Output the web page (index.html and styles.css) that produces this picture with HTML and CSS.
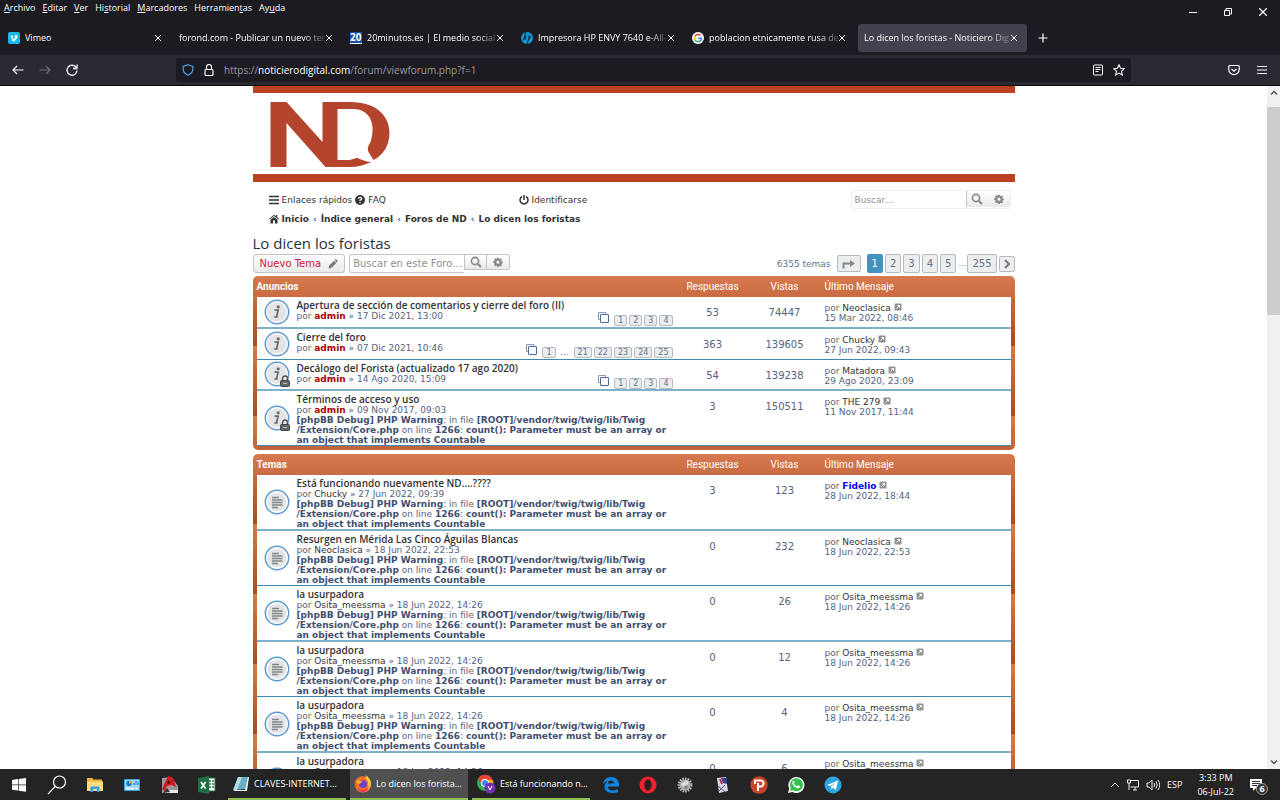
FILE: index.html
```
<!DOCTYPE html>
<html lang="es">
<head>
<meta charset="utf-8">
<title>Lo dicen los foristas - Noticiero Digital</title>
<link rel="stylesheet" href="styles.css">
</head>
<body>
<svg class="defs" aria-hidden="true">
  <symbol id="close" viewBox="0 0 8 8"><path d="M1 1l6 6M7 1L1 7" stroke="currentColor" fill="none"/></symbol>
  <symbol id="search" viewBox="0 0 12 12"><circle cx="5" cy="5" r="3.6" fill="none" stroke="currentColor" stroke-width="1.6"/><path d="M7.7 7.7l3.3 3.3" stroke="currentColor" stroke-width="2"/></symbol>
  <symbol id="gear" viewBox="0 0 12 12"><path fill-rule="evenodd" fill="currentColor" d="M5 .8h2l.3 1.4.9.4 1.2-.8 1.4 1.4-.8 1.2.4.9 1.4.3v2l-1.4.3-.4.9.8 1.2-1.4 1.4-1.2-.8-.9.4L7 12H5l-.3-1.4-.9-.4-1.2.8L1.200 9.600l.8-1.200-.4-.9L.2 7.200v-2l1.400-.3.4-.9-.8-1.200L2.600 1.400l1.200.8.9-.4zM6 4.300a1.900 1.900 0 100 3.800 1.900 1.900 0 000-3.800z"/></symbol>
  <symbol id="pages" viewBox="0 0 12 12"><path d="M3.500 8.500h-2v-7h7v2" fill="none" stroke="#8a9bb5"/><rect x="3.500" y="3.500" width="8" height="8" rx=".5" fill="#fff" stroke="#4c6a95"/></symbol>
  <symbol id="jump" viewBox="0 0 8 8"><rect x=".5" y=".5" width="7" height="7" rx="1" fill="#929292"/><path d="M2.500 5.500l2.500-2.500M3.500 2.500h2v2" stroke="#fff" fill="none"/></symbol>
  <symbol id="info" viewBox="0 0 26 26"><circle cx="13" cy="13" r="11.700" fill="#fff" stroke="#5b9bd0" stroke-width="1.500"/><circle cx="13" cy="13" r="9.800" fill="#e2e4e8"/><circle cx="14.200" cy="7.800" r="1.600" fill="#6c6c6c"/><path d="M10.500 11.200h3.700l-1.700 6.300h1.300M10.300 18h3.500" fill="none" stroke="#6c6c6c" stroke-width="1.700"/></symbol>
  <symbol id="lock" viewBox="0 0 10 12"><path d="M2.500 6V3.500a2.500 2.500 0 015 0V6" fill="none" stroke="#555" stroke-width="1.500"/><rect x=".5" y="5.500" width="9" height="6" rx="1" fill="#666" stroke="#444"/><path d="M3 8.500h4" stroke="#bbb"/></symbol>
  <symbol id="post" viewBox="0 0 26 26"><circle cx="13" cy="13" r="11.700" fill="#fff" stroke="#5b9bd0" stroke-width="1.500"/><circle cx="13" cy="13" r="9.500" fill="#e2e4e8"/><path d="M8 8.500h7M8 11h10.500M8 13.500h10.500M8 16h10.500M8 18.500h6" stroke="#858585" stroke-width="1.500"/></symbol>
</svg>

<header class="browser">
  <div class="menubar">
    <nav class="menus"><button><u>A</u>rchivo</button><button><u>E</u>ditar</button><button><u>V</u>er</button><button>Hi<u>s</u>torial</button><button><u>M</u>arcadores</button><button>Herramien<u>t</u>as</button><button>Ay<u>u</u>da</button></nav>
    <div class="window-buttons">
      <button aria-label="Minimizar"><svg class="i10" viewBox="0 0 10 10"><path d="M1 5.500h8" stroke="#fff"/></svg></button>
      <button aria-label="Restaurar"><svg class="i10" viewBox="0 0 10 10"><path d="M3 3V1.500h5.500V7H7M1.500 3.500h5v5h-5z" fill="none" stroke="#fff"/></svg></button>
      <button aria-label="Cerrar"><svg class="i10" viewBox="0 0 8 8"><use href="#close"/></svg></button>
    </div>
  </div>
  <div class="tabs">
    <div class="tab"><svg class="fav" viewBox="0 0 12 12"><rect width="12" height="12" rx="2" fill="#1ab7ea"/><path d="M2.300 4.200c1.300-1.200 2-1.200 2.400.3l.7 2.600c.5 1 1.500-.9 1.500-1.600 0-.5-.4-.6-.9-.4.9-2.700 3.500-2.600 3.500-.9C9.500 6.300 6.700 9.500 5.300 9.500 4 9.500 4 6.500 3.400 4.900c-.1-.3-.5-.1-.8.1z" fill="#fff"/></svg><span>Vimeo</span><button aria-label="Cerrar"><svg class="i8"><use href="#close"/></svg></button></div>
    <div class="tab"><span class="fade">forond.com - Publicar un nuevo ten</span><button aria-label="Cerrar"><svg class="i8"><use href="#close"/></svg></button></div>
    <div class="tab"><b class="fav20">20</b><span class="fade">20minutos.es | El medio social |</span><button aria-label="Cerrar"><svg class="i8"><use href="#close"/></svg></button></div>
    <div class="tab"><svg class="fav" viewBox="0 0 12 12"><circle cx="6" cy="6" r="6" fill="#0b96d5"/><path d="M4.800 0L2.500 8M3.400 4.500q1.800-1 1.400.4L4 8M8.500 4L6.200 12M7.300 4.500q2.500-1 2 .8T6.800 8" stroke="#16202c" fill="none"/></svg><span class="fade">Impresora HP ENVY 7640 e-All-i</span><button aria-label="Cerrar"><svg class="i8"><use href="#close"/></svg></button></div>
    <div class="tab"><svg class="fav" viewBox="0 0 12 12"><circle cx="6" cy="6" r="6" fill="#fff"/><path d="M8.600 3.600A3.500 3.500 0 003 4.300" stroke="#ea4335" stroke-width="1.500" fill="none"/><path d="M3 4.300a3.500 3.500 0 000 3.500" stroke="#fbbc05" stroke-width="1.500" fill="none"/><path d="M3 7.800a3.500 3.500 0 005.200 1" stroke="#34a853" stroke-width="1.500" fill="none"/><path d="M6 6.200h3.500Q9.400 8 8.200 8.800" stroke="#4285f4" stroke-width="1.500" fill="none"/></svg><span class="fade">poblacion etnicamente rusa de l</span><button aria-label="Cerrar"><svg class="i8"><use href="#close"/></svg></button></div>
    <div class="tab active"><span class="fade">Lo dicen los foristas - Noticiero Digit</span><button aria-label="Cerrar"><svg class="i8"><use href="#close"/></svg></button></div>
    <button class="newtab" aria-label="Nueva pestaña"><svg class="i10" viewBox="0 0 10 10"><path d="M5 .5v9M.5 5h9" stroke="#fff" stroke-width="1.200"/></svg></button>
  </div>
  <div class="toolbar">
    <div class="navbtns">
      <button aria-label="Atrás"><svg class="i12" viewBox="0 0 12 12"><path d="M11.500 6H1M5 2L1 6l4 4" fill="none" stroke="#fbfbfe" stroke-width="1.200"/></svg></button>
      <button aria-label="Adelante"><svg class="i12" viewBox="0 0 12 12"><path d="M.5 6H11M7 2l4 4-4 4" fill="none" stroke="#6c6b75" stroke-width="1.200"/></svg></button>
      <button aria-label="Recargar"><svg class="i12" viewBox="0 0 12 12"><path d="M10.200 3.500A5 5 0 1011 6.500M11 .5v4H7" fill="none" stroke="#fbfbfe" stroke-width="1.300"/></svg></button>
    </div>
    <div class="urlbar">
      <svg class="i12" viewBox="0 0 12 12"><path d="M6 .7l4.800 1.700v2.400c0 3-1.800 5.200-4.800 6.500C3 10 1.200 7.800 1.200 4.800V2.400z" fill="none" stroke="#4da3ea" stroke-width="1.200"/></svg>
      <svg class="i12" viewBox="0 0 12 12"><path d="M3.500 5.500V3a2.500 2.500 0 015 0v2.500" fill="none" stroke="#fbfbfe" stroke-width="1.200"/><rect x="2" y="5.500" width="8" height="6" rx="1" fill="none" stroke="#fbfbfe" stroke-width="1.200"/></svg>
      <p class="url">https://<b>noticierodigital.com</b>/forum/viewforum.php?f=1</p>
      <button aria-label="Vista de lectura"><svg class="i12" viewBox="0 0 12 12"><rect x="1.500" y="1" width="9" height="10" rx="1" fill="none" stroke="#fbfbfe"/><path d="M3.500 3.500h5M3.500 5.500h5M3.500 7.500h3" stroke="#fbfbfe"/></svg></button>
      <button aria-label="Marcador"><svg class="i12" viewBox="0 0 12 12"><path d="M6 .8l1.600 3.500 3.700.4-2.800 2.500.8 3.800L6 9.100 2.700 11l.8-3.800L.7 4.700l3.700-.4z" fill="none" stroke="#fbfbfe" stroke-width="1.100"/></svg></button>
    </div>
    <div class="tools">
      <button aria-label="Pocket"><svg class="i12" viewBox="0 0 12 12"><path d="M1.800 1.500h8.400q1 0 1 1v3a5.200 5.200 0 01-10.400 0v-3q0-1 1-1zM3.500 5L6 7.300 8.500 5" fill="none" stroke="#fbfbfe" stroke-width="1.200"/></svg></button>
      <button aria-label="Menú"><svg class="i10" viewBox="0 0 10 10"><path d="M0 1.500h10M0 5h10M0 8.500h10" stroke="#fbfbfe" stroke-width="1.200"/></svg></button>
    </div>
  </div>
</header>

<div class="viewport">
<main class="page"><div class="wrap">
  <div class="banner"><a href="#" aria-label="Noticiero Digital"><svg class="logo" viewBox="0 0 120 66"><path fill="#b5442c" fill-rule="evenodd" d="M1 1h16l36 40V1h28c26 0 39 14 39 31 0 12-6 22-16 27l-5-8c-2-4 1-8 2-10 6-18-1-33-17-33H68v51h10c5 0 7-2 10-2 5 2 9 4 14 4-7 3-14 5-22 5H56L17 22v44H1z"/></svg></a></div>
  <nav class="navbar">
    <div class="navrow">
      <div class="links"><a href="#"><svg class="i10" viewBox="0 0 10 10"><path d="M0 1.500h10M0 5h10M0 8.500h10" stroke="currentColor" stroke-width="1.700"/></svg>Enlaces rápidos</a><a href="#"><svg class="i10" viewBox="0 0 10 10"><circle cx="5" cy="5" r="5" fill="currentColor"/><path d="M3.300 3.800Q3.400 2.300 5 2.300t1.700 1.400Q6.700 4.500 5 5.200v.9M5 7v1.300" stroke="#fff" stroke-width="1.300" fill="none"/></svg>FAQ</a></div>
      <a class="login" href="#"><svg class="i10" viewBox="0 0 10 10"><path d="M5 0v5M3 1.500a4 4 0 104 0" fill="none" stroke="currentColor" stroke-width="1.500"/></svg>Identificarse</a>
      <form class="find top"><input type="text" placeholder="Buscar…" aria-label="Buscar"><button type="button" aria-label="Buscar"><svg class="i12"><use href="#search"/></svg></button><button type="button" aria-label="Búsqueda avanzada"><svg class="i10"><use href="#gear"/></svg></button></form>
    </div>
    <div class="crumbs"><a href="#"><svg class="i10" viewBox="0 0 10 10"><path d="M0 5l5-4.200L7 2.500V1h1.300v2.500L10 5l-.6.600L5 2 .6 5.600z" fill="currentColor"/><path d="M1.500 5.700L5 2.900l3.500 2.800v3.800H6V6.500H4v3H1.500z" fill="currentColor"/></svg>Inicio</a><i>‹</i><a href="#">Índice general</a><i>‹</i><a href="#">Foros de ND</a><i>‹</i><a href="#">Lo dicen los foristas</a></div>
  </nav>
  <h2>Lo dicen los foristas</h2>
  <div class="actions">
    <button class="new">Nuevo Tema <svg class="i10" viewBox="0 0 10 10"><path d="M.5 9.500l.6-2.800L6 1.800l2.200 2.200-4.900 4.900zM6.600 1.200l.7-.7q.5-.4 1 0l1.200 1.200q.4.500 0 1l-.7.700z" fill="#777"/></svg></button>
    <form class="find"><input type="text" placeholder="Buscar en este Foro…" aria-label="Buscar en este Foro"><button type="button" aria-label="Buscar"><svg class="i12"><use href="#search"/></svg></button><button type="button" aria-label="Búsqueda avanzada"><svg class="i10"><use href="#gear"/></svg></button></form>
    <div class="pager"><span class="count">6355 temas</span><a class="goto" href="#" aria-label="Ir a página"><svg class="jumpicon" viewBox="0 0 14 10"><path d="M1.500 9.500V4.500H9" fill="none" stroke="#888" stroke-width="2"/><path d="M8 1l5 3.500L8 8z" fill="#888"/></svg></a><strong>1</strong><a href="#">2</a><a href="#">3</a><a href="#">4</a><a href="#">5</a><span class="dots">…</span><a href="#">255</a><a class="next" href="#" aria-label="Siguiente"><svg class="i10" viewBox="0 0 10 10"><path d="M3 1l4 4-4 4" fill="none" stroke="#777" stroke-width="2"/></svg></a></div>
  </div>

  <section class="forumbg"><table>
    <colgroup><col class="c-icon"><col><col class="c-num"><col class="c-num"><col class="c-last"></colgroup>
    <thead><tr><th colspan="2" class="name">Anuncios</th><th>Respuestas</th><th>Vistas</th><th class="last">Último Mensaje</th></tr></thead>
    <tbody>
    <tr class="short"><td class="ic"><svg class="i26"><use href="#info"/></svg></td><td><div class="topic"><div><a class="title" href="#">Apertura de sección de comentarios y cierre del foro (II)</a><p>por <a class="admin" href="#">admin</a> » 17 Dic 2021, 13:00</p></div><div class="pages"><svg class="i12"><use href="#pages"/></svg><a href="#">1</a><a href="#">2</a><a href="#">3</a><a href="#">4</a></div></div></td><td class="num">53</td><td class="num">74447</td><td class="last">por <a href="#">Neoclasica</a> <svg class="i8"><use href="#jump"/></svg><br>15 Mar 2022, 08:46</td></tr>
    <tr class="short"><td class="ic"><svg class="i26"><use href="#info"/></svg></td><td><div class="topic"><div><a class="title" href="#">Cierre del foro</a><p>por <a class="admin" href="#">admin</a> » 07 Dic 2021, 10:46</p></div><div class="pages"><svg class="i12"><use href="#pages"/></svg><a href="#">1</a><span>…</span><a href="#">21</a><a href="#">22</a><a href="#">23</a><a href="#">24</a><a href="#">25</a></div></div></td><td class="num">363</td><td class="num">139605</td><td class="last">por <a href="#">Chucky</a> <svg class="i8"><use href="#jump"/></svg><br>27 Jun 2022, 09:43</td></tr>
    <tr class="short"><td class="ic"><span class="locked"><svg class="i26"><use href="#info"/></svg><svg class="lock"><use href="#lock"/></svg></span></td><td><div class="topic"><div><a class="title" href="#">Decálogo del Forista (actualizado 17 ago 2020)</a><p>por <a class="admin" href="#">admin</a> » 14 Ago 2020, 15:09</p></div><div class="pages"><svg class="i12"><use href="#pages"/></svg><a href="#">1</a><a href="#">2</a><a href="#">3</a><a href="#">4</a></div></div></td><td class="num">54</td><td class="num">139238</td><td class="last">por <a href="#">Matadora</a> <svg class="i8"><use href="#jump"/></svg><br>29 Ago 2020, 23:09</td></tr>
    <tr><td class="ic"><span class="locked"><svg class="i26"><use href="#info"/></svg><svg class="lock"><use href="#lock"/></svg></span></td><td><a class="title" href="#">Términos de acceso y uso</a><p>por <a class="admin" href="#">admin</a> » 09 Nov 2017, 09:03</p><p><b>[phpBB Debug] PHP Warning</b>: in file <b>[ROOT]/vendor/twig/twig/lib/Twig<br>/Extension/Core.php</b> on line <b>1266</b>: <b>count(): Parameter must be an array or<br>an object that implements Countable</b></p></td><td class="num">3</td><td class="num">150511</td><td class="last">por <a href="#">THE 279</a> <svg class="i8"><use href="#jump"/></svg><br>11 Nov 2017, 11:44</td></tr>
    </tbody>
  </table></section>

  <section class="forumbg"><table>
    <colgroup><col class="c-icon"><col><col class="c-num"><col class="c-num"><col class="c-last"></colgroup>
    <thead><tr><th colspan="2" class="name">Temas</th><th>Respuestas</th><th>Vistas</th><th class="last">Último Mensaje</th></tr></thead>
    <tbody>
    <tr><td class="ic"><svg class="i26"><use href="#post"/></svg></td><td><a class="title" href="#">Está funcionando nuevamente ND....????</a><p>por <a href="#">Chucky</a> » 27 Jun 2022, 09:39</p><p><b>[phpBB Debug] PHP Warning</b>: in file <b>[ROOT]/vendor/twig/twig/lib/Twig<br>/Extension/Core.php</b> on line <b>1266</b>: <b>count(): Parameter must be an array or<br>an object that implements Countable</b></p></td><td class="num">3</td><td class="num">123</td><td class="last">por <a class="mod" href="#">Fidelio</a> <svg class="i8"><use href="#jump"/></svg><br>28 Jun 2022, 18:44</td></tr>
    <tr><td class="ic"><svg class="i26"><use href="#post"/></svg></td><td><a class="title" href="#">Resurgen en Mérida Las Cinco Águilas Blancas</a><p>por <a href="#">Neoclasica</a> » 18 Jun 2022, 22:53</p><p><b>[phpBB Debug] PHP Warning</b>: in file <b>[ROOT]/vendor/twig/twig/lib/Twig<br>/Extension/Core.php</b> on line <b>1266</b>: <b>count(): Parameter must be an array or<br>an object that implements Countable</b></p></td><td class="num">0</td><td class="num">232</td><td class="last">por <a href="#">Neoclasica</a> <svg class="i8"><use href="#jump"/></svg><br>18 Jun 2022, 22:53</td></tr>
    <tr><td class="ic"><svg class="i26"><use href="#post"/></svg></td><td><a class="title" href="#">la usurpadora</a><p>por <a href="#">Osita_meessma</a> » 18 Jun 2022, 14:26</p><p><b>[phpBB Debug] PHP Warning</b>: in file <b>[ROOT]/vendor/twig/twig/lib/Twig<br>/Extension/Core.php</b> on line <b>1266</b>: <b>count(): Parameter must be an array or<br>an object that implements Countable</b></p></td><td class="num">0</td><td class="num">26</td><td class="last">por <a href="#">Osita_meessma</a> <svg class="i8"><use href="#jump"/></svg><br>18 Jun 2022, 14:26</td></tr>
    <tr><td class="ic"><svg class="i26"><use href="#post"/></svg></td><td><a class="title" href="#">la usurpadora</a><p>por <a href="#">Osita_meessma</a> » 18 Jun 2022, 14:26</p><p><b>[phpBB Debug] PHP Warning</b>: in file <b>[ROOT]/vendor/twig/twig/lib/Twig<br>/Extension/Core.php</b> on line <b>1266</b>: <b>count(): Parameter must be an array or<br>an object that implements Countable</b></p></td><td class="num">0</td><td class="num">12</td><td class="last">por <a href="#">Osita_meessma</a> <svg class="i8"><use href="#jump"/></svg><br>18 Jun 2022, 14:26</td></tr>
    <tr><td class="ic"><svg class="i26"><use href="#post"/></svg></td><td><a class="title" href="#">la usurpadora</a><p>por <a href="#">Osita_meessma</a> » 18 Jun 2022, 14:26</p><p><b>[phpBB Debug] PHP Warning</b>: in file <b>[ROOT]/vendor/twig/twig/lib/Twig<br>/Extension/Core.php</b> on line <b>1266</b>: <b>count(): Parameter must be an array or<br>an object that implements Countable</b></p></td><td class="num">0</td><td class="num">4</td><td class="last">por <a href="#">Osita_meessma</a> <svg class="i8"><use href="#jump"/></svg><br>18 Jun 2022, 14:26</td></tr>
    <tr><td class="ic"><svg class="i26"><use href="#post"/></svg></td><td><a class="title" href="#">la usurpadora</a><p>por <a href="#">Osita_meessma</a> » 18 Jun 2022, 14:26</p></td><td class="num">0</td><td class="num">6</td><td class="last">por <a href="#">Osita_meessma</a> <svg class="i8"><use href="#jump"/></svg><br>18 Jun 2022, 14:26</td></tr>
    </tbody>
  </table></section>
</div></main>
<div class="scrollbar"><svg class="i8" viewBox="0 0 8 8"><path d="M1 5.500l3-3 3 3" fill="none" stroke="#555" stroke-width="1.500"/></svg><div class="track"><div class="thumb"></div></div><svg class="i8" viewBox="0 0 8 8"><path d="M1 2.500l3 3 3-3" fill="none" stroke="#555" stroke-width="1.500"/></svg></div>
</div>

<footer class="taskbar">
  <button class="app wide" aria-label="Inicio"><svg class="i14" viewBox="0 0 14 14"><path d="M0 2l6-.9v5.400H0zM6.700 1L14 0v6.500H6.700zM0 7.200h6v5.400l-6-.9zM6.700 7.200H14v6.600l-7.300-1z" fill="#fff"/></svg></button>
  <button class="app wide" aria-label="Buscar"><svg class="i20" viewBox="0 0 20 20"><circle cx="12.500" cy="7" r="6" fill="none" stroke="#fff" stroke-width="1.200"/><path d="M8.300 11.300L1 19" stroke="#fff" stroke-width="1.200"/></svg></button>
  <button class="app" aria-label="Explorador"><svg class="i16" viewBox="0 0 16 16"><path d="M0 1h5.500l1 1.500H15V14H0z" fill="#e8b53a"/><path d="M0 4.500h16V14H0z" fill="#fbdc80"/><path d="M3.500 15V9.500h9V15h-2.700v-3H6.200v3z" fill="#35a2e0"/></svg></button>
  <button class="app wide" aria-label="Panel de control"><svg class="i16" viewBox="0 0 16 16"><rect y="2" width="16" height="12" rx="1" fill="#36a8e8"/><rect x="1" y="3" width="14" height="10" fill="#9bd9f7"/><circle cx="5" cy="6.500" r="2.700" fill="#1979bd"/><path d="M5 6.500V3.800A2.700 2.700 0 017.700 6.500z" fill="#f5a623"/><path d="M10 8V6M12 8V4M14 8V5" stroke="#1979bd"/><path d="M2 11.500h8M11.500 11.500h2" stroke="#fff" stroke-width="1.300"/></svg></button>
  <button class="app" aria-label="AutoCAD"><svg class="i18" viewBox="0 0 18 18"><path d="M1 2l9-1 7 9v7H1z" fill="#9a9a9a"/><path d="M4 14h13v3H4z" fill="#e6e6e6"/><path d="M1 13L7 0l5 2 3 9-5-2-4 1-2 5z" fill="#d51920"/><path d="M7 4L6 8l4-1z" fill="#511"/><path d="M2 17l4-5 3 4z" fill="#333"/></svg></button>
  <button class="app wide" aria-label="Excel"><svg class="i18" viewBox="0 0 18 18"><path d="M9 2h8v13H9z" fill="#fff" stroke="#1d7044"/><path d="M10 5h3M10 8h3M10 11h3M14 5h2M14 8h2M14 11h2" stroke="#1d7044" stroke-width="1.500"/><path d="M0 2l11-2v18L0 16z" fill="#1d7044"/><path d="M3 6l4.500 6.500M7.500 6L3 12.500" stroke="#fff" stroke-width="1.600"/></svg></button>
  <button class="task"><svg class="i18" viewBox="0 0 18 18"><path d="M6 2h11l-3 12-12 1z" fill="#6aaec6"/><path d="M6 2h4L5 15H1z" fill="#b4dde6"/><path d="M1 15l12 0 3-13 1 0-2 14H3z" fill="#e9f4f6"/></svg><span>CLAVES-INTERNET…</span></button>
  <button class="task on"><svg class="i18" viewBox="0 0 18 18"><circle cx="9" cy="9.500" r="8" fill="#ff9022"/><path d="M1.500 5c3-2 5 0 6-4 2 0 3 2 4 3l2-2c3 2 4 5 3.500 8-2 8-13 9-15.500 2C1 9 1 7 1.500 5z" fill="#ff6a25"/><path d="M11.500 0c3 2 6 6 5.200 10-1 3-3 6-6 7 4-4 5-9 2-12z" fill="#ffd43d"/><path d="M3 13c4 4 10 3 12-2 0 6-8 9-12 2z" fill="#ee2861"/><circle cx="9" cy="9" r="4" fill="#6b45c7"/><path d="M2 6c3-1 5 0 7 1-2 0-3 2-5 2z" fill="#ffae2d"/></svg><span>Lo dicen los forista…</span></button>
  <button class="task"><svg class="i20" viewBox="0 0 20 20"><circle cx="9" cy="9" r="8" fill="#35a853"/><path d="M2 5a8 8 0 0114.500 1H9L6 10z" fill="#ea4335"/><path d="M16.800 6A8 8 0 019 17l4-7-2-4z" fill="#fbbc05"/><circle cx="9" cy="9" r="4" fill="#fff"/><circle cx="9" cy="9" r="3" fill="#4285f4"/><circle cx="14" cy="14" r="5.500" fill="#7030b5"/><path d="M12 12l2 4 2-4" fill="none" stroke="#fff"/></svg><span>Está funcionando n…</span></button>
  <button class="app" aria-label="Edge"><svg class="i18" viewBox="0 0 18 18"><path d="M1 8C2 3 5 1 9 1c5 0 8 3 8 8v1.500H6c0 3 2 4 5 4 2 0 3.500-.5 5-1.400v3c-1.500.7-3 1-5.500 1-5 0-8-2.500-8-6.500 0-2.500 1.500-4.500 4-5.600C3.500 5.500 2 6.500 1 8zm5-.5h6c0-2-1-3-3-3S6 5.700 6 7.500z" fill="#0e83df" fill-rule="evenodd"/></svg></button>
  <button class="app" aria-label="Opera"><svg class="i18" viewBox="0 0 18 18"><path fill-rule="evenodd" fill="#f0202e" d="M9 .5a8.500 8.500 0 100 17 8.500 8.500 0 000-17zm0 3c2.500 0 3.500 2.500 3.500 5.500s-1 5.500-3.500 5.500S5.500 12 5.500 9 6.500 3.500 9 3.500z"/></svg></button>
  <button class="app" aria-label="Ajustes"><svg class="i18" viewBox="0 0 18 18"><circle cx="9" cy="9" r="6" fill="none" stroke="#bbb" stroke-width="3" stroke-dasharray="1.500 1"/><circle cx="9" cy="9" r="5.500" fill="#aaa"/><path d="M5 8l6-4 2 4-6 3z" fill="#ddd"/><circle cx="10" cy="11" r="1.500" fill="#777"/></svg></button>
  <button class="app" aria-label="Documentos"><svg class="i18" viewBox="0 0 18 18"><path d="M4 2l9-1 2 14-9 2z" fill="#d5d5e6"/><path d="M8 2l6 0 0 6-4-1z" fill="#344594"/><path d="M7 3l2 5" stroke="#c23543" stroke-width="2"/><path d="M5 10l7 6M12 9l-6 6" stroke="#55586f"/></svg></button>
  <button class="app" aria-label="PDF"><svg class="i18" viewBox="0 0 18 18"><circle cx="9" cy="9" r="8.700" fill="#c8452a"/><path d="M5 8V4.500h5.500a2.800 2.800 0 010 6H9M8 7v8" fill="none" stroke="#fff" stroke-width="2"/></svg></button>
  <button class="app" aria-label="WhatsApp"><svg class="i18" viewBox="0 0 18 18"><path d="M1 17l1.200-4.500A8 8 0 115.500 16z" fill="#fff"/><path d="M3 15l.8-3A6.500 6.500 0 116 14.300z" fill="#35c252"/><path d="M5.500 5.500c1-1.500 2-.5 2 1l-.5 1c.7 1.500 1.500 2 3 2.800l1-1c1.500.3 2.500 1 1.500 2.200-2 2.500-8-2-7-6z" fill="#fff"/></svg></button>
  <button class="app" aria-label="Telegram"><svg class="i18" viewBox="0 0 18 18"><circle cx="9" cy="9" r="8.500" fill="#2ea3dc"/><path d="M3 9l11-4.500-2 9.500-3-2.200L7.300 13.500 7 10.500l5-4-6 3.500z" fill="#fff"/></svg></button>
  <div class="tray">
    <svg class="i10" viewBox="0 0 10 10"><path d="M1 7l4-4 4 4" fill="none" stroke="#eee"/></svg>
    <svg class="i12" viewBox="0 0 12 12"><path d="M4 1.500h7.500v6.500H3.500M6 11h4M8 8v3M.5 1h3v3h-3zM2 4v7" fill="none" stroke="#eee"/></svg>
    <svg class="i14" viewBox="0 0 14 14"><path d="M1 5h2l3-3v10L3 9H1zM8 5q1.500 2 0 4M10 3.500q2.500 3.500 0 7M12 2q3.500 5 0 10" fill="none" stroke="#eee"/></svg>
    <span>ESP</span>
    <time>3:33 PM<br>06-Jul-22</time>
    <button class="notes" aria-label="Notificaciones"><svg class="i14" viewBox="0 0 14 14"><path d="M1 1h12v9H7l-3 3v-3H1z" fill="#fff"/><path d="M3 3.500h8M3 5.500h8M3 7.500h5" stroke="#333"/></svg><b>6</b></button>
  </div>
</footer>
</body>
</html>
```
FILE: styles.css
```
* { box-sizing: border-box; }
body { margin: 0; height: 100vh; display: flex; flex-direction: column; overflow: hidden; background: #fff; font-family: "DejaVu Sans", Verdana, sans-serif; font-size: 9px; line-height: 10px; color: #536482; }
button { margin: 0; padding: 0; border: 0; background: none; font: inherit; color: inherit; display: flex; align-items: center; }
p, h2 { margin: 0; }
a { color: #333; text-decoration: none; }
svg { flex: none; }
.defs { display: none; }
.i8 { width: 8px; height: 8px; }
.i10 { width: 10px; height: 10px; }
.i12 { width: 12px; height: 12px; }
.i14 { width: 14px; height: 14px; }
.i16 { width: 16px; height: 16px; }
.i18 { width: 18px; height: 18px; }
.i20 { width: 20px; height: 20px; }
.i26 { width: 26px; height: 26px; display: block; }

.browser { flex: none; background: #1c1b22; color: #fbfbfe; font-family: "Open Sans", sans-serif; border-bottom: 1px solid #0c0c0d; }
.menubar { display: flex; justify-content: space-between; height: 23px; padding: 0 12px 0 4px; }
.menus { display: flex; gap: 7px; height: 16px; }
.window-buttons { display: flex; gap: 25px; align-items: center; }
.tabs { display: flex; height: 32px; padding: 1px 0 3px; }
.tab { flex: 0 1 171px; min-width: 0; display: flex; align-items: center; padding: 0 9px 0 8px; border-radius: 3px; line-height: 14px; }
.tab span { flex: 1; min-width: 0; overflow: hidden; white-space: nowrap; }
.tab .fade { mask-image: linear-gradient(90deg, #000 85%, rgba(0, 0, 0, .2)); }
.tab.active { flex-basis: 169px; background: #42414d; margin: 0 11px 0 3px; padding-left: 6px; }
.fav, .fav20 { width: 12px; margin-right: 5px; }
.fav { height: 12px; }
.fav20 { background: #1b4fa8; font-size: 10px; line-height: 11px; border-bottom: 1px solid #fff; }
.toolbar { display: flex; align-items: center; height: 30px; background: #2b2a33; padding-right: 13px; }
.navbtns { display: flex; gap: 15px; width: 176px; padding-left: 12px; }
.urlbar { flex: 1; display: flex; align-items: center; gap: 9px; height: 24px; padding: 0 6px; border-radius: 3px; background: #1c1b22; }
.url { flex: 1; font-size: 10px; line-height: 14px; color: #98979f; }
.url b { font-weight: 400; color: #fbfbfe; }
.tools { width: 136px; display: flex; justify-content: flex-end; gap: 17px; }

.viewport { flex: 1; min-height: 0; display: flex; }
.page { flex: 1; overflow: hidden; }
.wrap { max-width: 762px; margin: 0 auto; }
.banner { border: solid #bb4120; border-width: 7px 0 8px; height: 96px; padding: 8px 16px; }
.logo { width: 121px; height: 66px; display: block; }
.navbar { padding: 8px 4px 0 16px; }
.navrow { display: grid; grid-template-columns: 250px 1fr auto; align-items: center; }
.links { display: flex; gap: 3px; }
.links a, .login { display: flex; align-items: center; gap: 3px; }
.crumbs { display: flex; gap: 4px; margin-top: 4px; line-height: 12px; font-weight: 700; }
.crumbs a { display: flex; align-items: center; gap: 3px; }
.crumbs i { font-style: normal; }
.find { display: flex; height: 16px; border-radius: 3px; }
.find input { width: 115px; height: 19px; border: 1px solid #c7c3bf; border-right: 0; border-radius: 3px 0 0 3px; background: #fff; padding: 0 0 0 3px; font: 10px "DejaVu Sans", sans-serif; outline: 0; }
.find input::placeholder { color: #8f8f8f; }
.find button { width: 23px; justify-content: center; border: 1px solid #c7c3bf; background: linear-gradient(#fff, #e9e9e9); color: #888; }
.find button + button { border-left: 0; border-radius: 0 3px 3px 0; }
.find.top { height: 19px; border: 1px solid #eee; }
.find.top input { width: 114px; height: 17px; border: 0; font-size: 9px; }
.find.top button { height: 16px; width: 22px; border-width: 0 0 0 1px; }
h2 { margin-top: 9px; color: #28313f; font: 15px/18px "Open Sans", sans-serif; }
.actions { display: flex; align-items: flex-start; gap: 4px; height: 23px; margin-top: 1px; padding-top: 1px; }
.new { height: 19px; padding: 0 6px; gap: 7px; border: 1px solid #c7c3bf; border-radius: 3px; background: linear-gradient(#fff, #e9e9e9); color: #d31141; font-size: 10px; }
.pager { margin-left: auto; display: flex; align-items: center; gap: 2px; font-size: 10px; color: #5c758c; }
.pager a, .pager strong { display: flex; align-items: center; height: 19px; padding: 0 4px; border: 1px solid #b4bac0; border-radius: 2px; background: #ecedee; color: #5c758c; font-weight: 400; }
.pager strong { background: #4692bf; border-color: #4692bf; color: #fff; }
.pager .goto { margin: 0 4px; height: 17px; }
.pager .next { height: 16px; padding: 0 2px; }
.jumpicon { width: 14px; height: 10px; }
.count { font-size: 9px; }
.dots { width: 7px; font-size: 8px; }

.forumbg { margin-bottom: 4px; padding: 1px 4px 4px; border-radius: 5px; background: linear-gradient(#d6794e, #a84a25) 0 0 / 100% 70px; }
table { width: 100%; table-layout: fixed; border-collapse: collapse; }
.c-icon { width: 40px; }
.c-num { width: 72px; }
.c-last { width: 190px; }
thead tr { background: linear-gradient(#d6794e, #ca6b41); }
th { height: 20px; padding: 0; color: #fff; font: 400 10px/12px Roboto, sans-serif; }
th.name { text-align: left; font-weight: 700; }
th.last, td.last { text-align: left; padding-left: 4px; }
tbody tr { background: #fff; height: 55px; }
tbody tr.short { height: 31px; }
td { padding: 0; vertical-align: top; border-bottom: 1px solid #3d88b0; }
tbody tr:nth-child(odd) td { border-bottom: 2px solid #7eb1cc; }
td.ic { padding-left: 7px; vertical-align: middle; }
.title { display: block; padding-top: 2px; line-height: 12px; font-family: "Open Sans", sans-serif; font-size: 10px; font-weight: 600; }
td b { color: #3f4f70; }
.admin { color: #a00; font-weight: 700; }
.mod { color: #00f; font-weight: 700; }
.num { padding-top: 11px; text-align: center; font-size: 10px; }
td.last { padding-top: 6px; }
.topic { display: flex; justify-content: space-between; height: 29px; padding-right: 4px; }
.pages { align-self: flex-end; display: flex; align-items: flex-end; gap: 2px; font-size: 8px; }
.pages svg { margin: 0 3px 3px 0; }
.pages span { margin: 0 3px; }
.pages a { padding: 0 3px; border: 1px solid #b4bac0; border-radius: 2px; background: #ecedee; color: #5c758c; line-height: 9px; }
.locked { position: relative; display: block; width: 26px; }
.lock { position: absolute; right: 0; bottom: 0; width: 10px; height: 12px; }

.scrollbar { width: 13px; background: #f0f0f0; display: flex; flex-direction: column; align-items: center; padding: 3px 0; }
.track { flex: 1; width: 100%; padding: 10px 0 0; }
.thumb { height: 32%; background: #cdcdcd; }

.taskbar { flex: none; display: flex; align-items: center; height: 31px; background: #242424; color: #fff; font-family: "Open Sans", sans-serif; }
.app { width: 37px; height: 31px; justify-content: center; }
.app.wide { width: 38px; }
.task { width: 118px; height: 31px; gap: 4px; padding: 0 4px; margin: 0 2px; border-bottom: 2px solid #8cc152; white-space: nowrap; line-height: 14px; }
.task.on { background: #505050; }
.tray { margin-left: auto; display: flex; align-items: center; gap: 7px; padding-right: 12px; }
.tray time { margin: 0 8px; text-align: center; line-height: 14px; }
.notes { position: relative; width: 19px; }
.notes b { position: absolute; left: 7px; top: 5px; width: 12px; height: 12px; border: 1px solid #999; border-radius: 6px; background: #333; line-height: 10px; text-align: center; }
```
